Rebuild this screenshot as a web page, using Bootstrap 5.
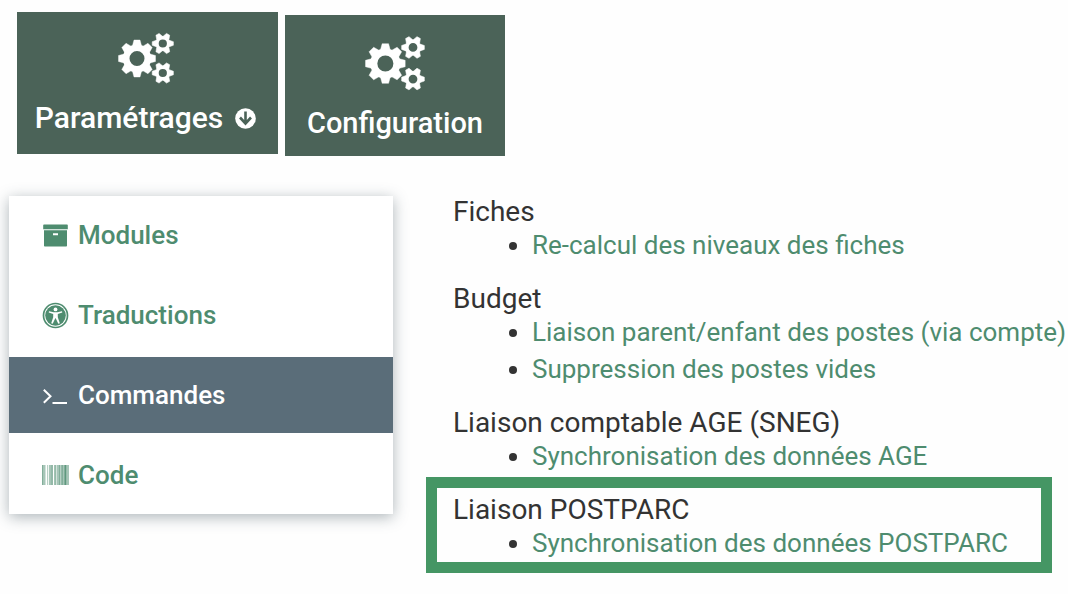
<!DOCTYPE html>
<html lang="fr">
<head>
<meta charset="utf-8">
<meta name="viewport" content="width=device-width, initial-scale=1">
<title>Configuration – Commandes</title>
<link rel="stylesheet" href="https://cdn.jsdelivr.net/npm/bootstrap@5.3.0/dist/css/bootstrap.min.css">
<style>
  :root { --tile: #4b6358; --leaf: #4e8c6f; --slate: #5a6d79; --frame: #459664; }
  body { font-family: Roboto, "Liberation Sans", sans-serif; color: #333; background: #fefefe; }
  .page { padding: 12px 0 16px 9px; }
  .tiles { gap: 7px; padding-left: 8px; margin-bottom: 40px; }
  .tile { display: flex; flex-direction: column; align-items: center; justify-content: flex-start; background: var(--tile); color: #fff; border: 0; height: 142px; font-size: 30px; font-weight: 500; line-height: 36px; padding: 20px 0 0; }
  .tile-menu { width: 261px; padding-right: 4px; }
  .tile-link { width: 220px; height: 141px; margin-top: 3px; font-size: 29px; }
  .tile-menu .cogs { width: 56px; height: 52px; margin-bottom: 16px; }
  .tile-link .cogs { width: 60px; height: 56px; margin-bottom: 14px; }
  .tile .arrow { width: 21px; height: 21px; }
  .side { width: 384px; gap: 4px; padding: 1px 0; background: #fff; box-shadow: 0 3px 14px rgba(50, 70, 80, .4); }
  .side a { display: flex; align-items: center; gap: 9px; height: 76px; padding-left: 33px; color: var(--leaf); font-size: 26px; font-weight: 500; text-decoration: none; }
  .side a.active { background: var(--slate); color: #fff; }
  .side svg { width: 27px; height: 27px; }
  .commands { padding: 1px 0 0 60px; }
  .commands section + section { margin-top: 20px; }
  .commands h2 { margin: 0; font-size: 28px; font-weight: 400; line-height: 30px; }
  .commands ul { margin: 0; padding-left: 79px; font-size: 26px; line-height: 37px; }
  .commands a { color: var(--leaf); text-decoration: none; }
  .commands section.framed { margin: 2px 16px 0 -27px; padding: 7px 16px 0; border: 11px solid var(--frame); }
</style>
</head>
<body>
<svg class="d-none" aria-hidden="true">
  <defs>
    <path id="tooth8" d="M-4.500-13 -3-18.500H3L4.500-13Z"/>
    <path id="tooth6" d="M-3.300-6.500 -1.800-10.600H1.800L3.300-6.500Z"/>
    <g id="gear6" fill="#fff" stroke="#fff" stroke-width=".5" stroke-linejoin="round">
      <circle r="5.800" fill="none" stroke-width="3.400"/>
      <use href="#tooth6" transform="rotate(30)"/><use href="#tooth6" transform="rotate(90)"/><use href="#tooth6" transform="rotate(150)"/>
      <use href="#tooth6" transform="rotate(210)"/><use href="#tooth6" transform="rotate(270)"/><use href="#tooth6" transform="rotate(330)"/>
    </g>
    <symbol id="cogs" viewBox="0 0 56 52">
      <g transform="translate(19 26.500)" fill="#fff" stroke="#fff" stroke-width=".4" stroke-linejoin="round">
        <circle r="10.800" fill="none" stroke-width="6.600"/>
        <use href="#tooth8"/><use href="#tooth8" transform="rotate(45)"/><use href="#tooth8" transform="rotate(90)"/><use href="#tooth8" transform="rotate(135)"/>
        <use href="#tooth8" transform="rotate(180)"/><use href="#tooth8" transform="rotate(225)"/><use href="#tooth8" transform="rotate(270)"/><use href="#tooth8" transform="rotate(315)"/>
      </g>
      <use href="#gear6" transform="translate(44.800 11.500)"/>
      <use href="#gear6" transform="translate(44.800 41)"/>
    </symbol>
  </defs>
</svg>

<div class="container-fluid page">
  <div class="tiles d-flex flex-wrap align-items-start">
    <button type="button" class="tile tile-menu">
      <svg class="cogs" aria-hidden="true"><use href="#cogs"/></svg>
      <span class="d-flex align-items-center justify-content-center gap-2"><span class="me-1">Paramétrages</span>
        <svg class="arrow" viewBox="0 0 21 21" aria-hidden="true"><circle cx="10.500" cy="10.500" r="10.300" fill="#fff"/><path d="M10.500 3.500v12M5 9.500l5.500 6 5.500-6" fill="none" stroke="#4b6358" stroke-width="2.600"/></svg>
      </span>
    </button>
    <button type="button" class="tile tile-link">
      <svg class="cogs" aria-hidden="true"><use href="#cogs"/></svg>
      Configuration
    </button>
  </div>

  <div class="d-flex align-items-start">
    <nav class="side d-flex flex-column flex-shrink-0" aria-label="Configuration">
      <a href="#modules">
        <svg viewBox="0 0 27 27" fill="currentColor" aria-hidden="true"><path d="M2 2.500h23a.8.8 0 0 1 .8.800v4H1.200v-4a.8.8 0 0 1 .8-.8Z"/><path fill-rule="evenodd" d="M2 8.300h23v15.500a.8.800 0 0 1-.8.800H2.800a.8.8 0 0 1-.8-.8ZM11 11.300v1.900h5v-1.900Z"/></svg>
        Modules</a>
      <a href="#traductions">
        <svg viewBox="0 0 27 27" aria-hidden="true"><circle cx="13.500" cy="13.500" r="12" fill="none" stroke="currentColor" stroke-width="1.700"/><circle cx="13.500" cy="13.500" r="10.300" fill="currentColor"/><circle cx="13.500" cy="7.400" r="1.900" fill="#fff"/><path fill="#fff" d="M7 9.200l4.700 1h3.600l4.700-1 .3 1.300-4.500 1.400v3.400l2 5.900-1.500.6-2.600-5.500h-.4l-2.600 5.500-1.500-.6 2-5.900v-3.400L6.700 10.500Z"/></svg>
        Traductions</a>
      <a href="#commandes" class="active" aria-current="page">
        <svg viewBox="0 0 27 27" fill="none" stroke="currentColor" stroke-width="2" aria-hidden="true"><path d="M1.800 7.800l6.700 6.500-6.700 6.500M10.500 21H25"/></svg>
        Commandes</a>
      <a href="#code">
        <svg viewBox="0 0 27 27" fill="currentColor" aria-hidden="true"><path opacity=".5" d="M0 3h3.500v20H0ZM7 3h4v20H7ZM14.500 3h4v20h-4ZM19 3h8v20h-8Z"/><path opacity=".4" d="M0 3h1v20H0ZM5 3h1.200v20H5ZM9.500 3h1v20h-1ZM12.500 3h1.300v20h-1.300ZM17 3h1.500v20H17ZM19.500 3H21v20h-1.500Z"/><path opacity=".8" d="M22.500 3h1.700v20h-1.700ZM12.500 3h1v20h-1Z"/></svg>
        Code</a>
    </nav>

    <main class="commands flex-grow-1">
      <section>
        <h2>Fiches</h2>
        <ul><li><a href="#niveaux">Re-calcul des niveaux des fiches</a></li></ul>
      </section>
      <section>
        <h2>Budget</h2>
        <ul>
          <li><a href="#liaison">Liaison parent/enfant des postes (via compte)</a></li>
          <li><a href="#suppression">Suppression des postes vides</a></li>
        </ul>
      </section>
      <section>
        <h2>Liaison comptable AGE (SNEG)</h2>
        <ul><li><a href="#age">Synchronisation des données AGE</a></li></ul>
      </section>
      <section class="framed">
        <h2>Liaison POSTPARC</h2>
        <ul><li><a href="#postparc">Synchronisation des données POSTPARC</a></li></ul>
      </section>
    </main>
  </div>
</div>
<script src="https://cdn.jsdelivr.net/npm/bootstrap@5.3.0/dist/js/bootstrap.bundle.min.js"></script>
</body>
</html>
